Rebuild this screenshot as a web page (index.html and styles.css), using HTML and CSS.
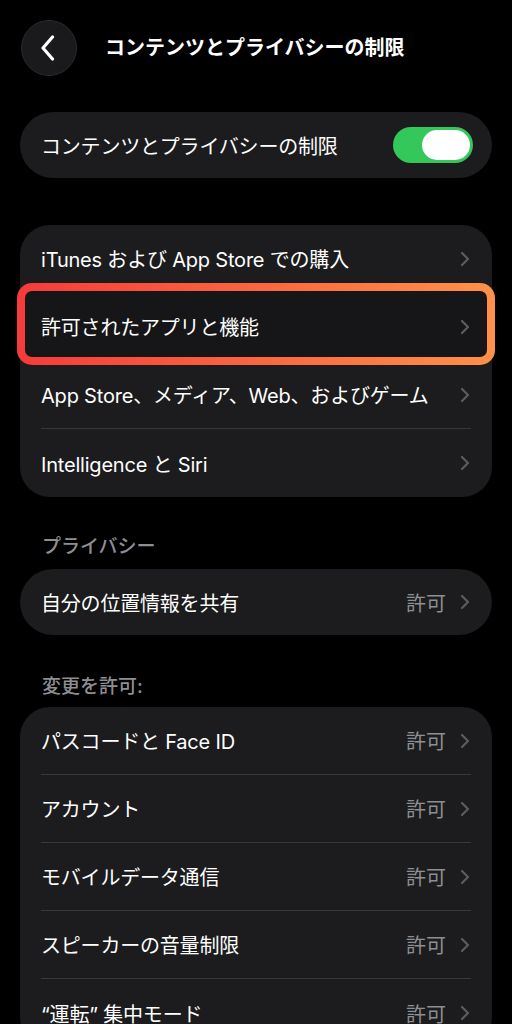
FILE: index.html
```html
<!DOCTYPE html>
<html lang="ja">
<head>
    <meta charset="UTF-8">
    <meta name="viewport" content="width=device-width, initial-scale=1.0">
    <title>コンテンツとプライバシーの制限</title>
    <link rel="stylesheet" href="styles.css">
</head>
<body>
    <header class="nav">
        <button class="back" aria-label="戻る">
            <svg width="16" height="26" viewBox="0 0 16 26"><path d="M12.5 2 L3 13 L12.5 24" fill="none" stroke="#fff" stroke-width="3.2" stroke-linecap="round" stroke-linejoin="round"/></svg>
        </button>
        <h1 class="nav-title">コンテンツとプライバシーの制限</h1>
    </header>

    <main class="content">
        <div class="group single toggle-group">
            <div class="row">
                <span class="label">コンテンツとプライバシーの制限</span>
                <span class="switch"><span class="knob"></span></span>
            </div>
        </div>

        <div class="group main-group">
            <div class="row">
                <span class="label">iTunes および App Store での購入</span>
                <span class="chev"><svg width="10" height="16" viewBox="0 0 10 16"><path d="M2 2 L8 8 L2 14" fill="none" stroke="#5c5c61" stroke-width="2.2" stroke-linecap="round" stroke-linejoin="round"/></svg></span>
            </div>
            <div class="row highlight">
                <span class="label">許可されたアプリと機能</span>
                <span class="chev"><svg width="10" height="16" viewBox="0 0 10 16"><path d="M2 2 L8 8 L2 14" fill="none" stroke="#5c5c61" stroke-width="2.2" stroke-linecap="round" stroke-linejoin="round"/></svg></span>
            </div>
            <div class="row">
                <span class="label">App Store、メディア、Web、およびゲーム</span>
                <span class="chev"><svg width="10" height="16" viewBox="0 0 10 16"><path d="M2 2 L8 8 L2 14" fill="none" stroke="#5c5c61" stroke-width="2.2" stroke-linecap="round" stroke-linejoin="round"/></svg></span>
            </div>
            <div class="row">
                <span class="label">Intelligence と Siri</span>
                <span class="chev"><svg width="10" height="16" viewBox="0 0 10 16"><path d="M2 2 L8 8 L2 14" fill="none" stroke="#5c5c61" stroke-width="2.2" stroke-linecap="round" stroke-linejoin="round"/></svg></span>
            </div>
        </div>

        <h2 class="section-title first">プライバシー</h2>
        <div class="group single">
            <div class="row">
                <span class="label">自分の位置情報を共有</span>
                <span class="value">許可</span>
                <span class="chev"><svg width="10" height="16" viewBox="0 0 10 16"><path d="M2 2 L8 8 L2 14" fill="none" stroke="#5c5c61" stroke-width="2.2" stroke-linecap="round" stroke-linejoin="round"/></svg></span>
            </div>
        </div>

        <h2 class="section-title">変更を許可:</h2>
        <div class="group">
            <div class="row">
                <span class="label">パスコードと Face ID</span>
                <span class="value">許可</span>
                <span class="chev"><svg width="10" height="16" viewBox="0 0 10 16"><path d="M2 2 L8 8 L2 14" fill="none" stroke="#5c5c61" stroke-width="2.2" stroke-linecap="round" stroke-linejoin="round"/></svg></span>
            </div>
            <div class="row">
                <span class="label">アカウント</span>
                <span class="value">許可</span>
                <span class="chev"><svg width="10" height="16" viewBox="0 0 10 16"><path d="M2 2 L8 8 L2 14" fill="none" stroke="#5c5c61" stroke-width="2.2" stroke-linecap="round" stroke-linejoin="round"/></svg></span>
            </div>
            <div class="row">
                <span class="label">モバイルデータ通信</span>
                <span class="value">許可</span>
                <span class="chev"><svg width="10" height="16" viewBox="0 0 10 16"><path d="M2 2 L8 8 L2 14" fill="none" stroke="#5c5c61" stroke-width="2.2" stroke-linecap="round" stroke-linejoin="round"/></svg></span>
            </div>
            <div class="row">
                <span class="label">スピーカーの音量制限</span>
                <span class="value">許可</span>
                <span class="chev"><svg width="10" height="16" viewBox="0 0 10 16"><path d="M2 2 L8 8 L2 14" fill="none" stroke="#5c5c61" stroke-width="2.2" stroke-linecap="round" stroke-linejoin="round"/></svg></span>
            </div>
            <div class="row">
                <span class="label">“運転” 集中モード</span>
                <span class="value">許可</span>
                <span class="chev"><svg width="10" height="16" viewBox="0 0 10 16"><path d="M2 2 L8 8 L2 14" fill="none" stroke="#5c5c61" stroke-width="2.2" stroke-linecap="round" stroke-linejoin="round"/></svg></span>
            </div>
        </div>
    </main>
</body>
</html>
```

FILE: styles.css
```css
* {
    box-sizing: border-box;
}
html, body {
    background: #000;
}
body {
    margin: 0;
    width: 512px;
    color: #fff;
    font-family: Inter, "Noto Sans CJK JP", sans-serif;
    overflow: hidden;
}
.nav {
    display: flex;
    align-items: center;
    gap: 28px;
    padding: 20px 20px 0 21px;
    height: 76px;
}
.back {
    width: 56px;
    height: 56px;
    border-radius: 50%;
    background: #1a1a1c;
    border: 1px solid #2a2a2c;
    display: flex;
    align-items: center;
    justify-content: center;
    padding: 0 3px 0 0;
}
.back svg {
    display: block;
}
.nav-title {
    margin: 0;
    font-size: 20px;
    font-weight: 700;
    line-height: 24px;
}
.content {
    padding: 36px 20px 0;
}
.group {
    background: #1c1c1e;
    border-radius: 30px;
}
.group.single {
    border-radius: 33px;
}
.main-group {
    margin-top: 47px;
}
.row {
    position: relative;
    display: flex;
    align-items: center;
    height: 68px;
    margin: 0 21px 0 21px;
    border-bottom: 1px solid #38383a;
    font-size: 20px;
}
.row:last-child {
    border-bottom: none;
}
.single .row {
    height: 66px;
}
.label {
    position: relative;
    z-index: 1;
    flex: 1;
    white-space: nowrap;
    letter-spacing: -0.2px;
}
.value {
    position: relative;
    z-index: 1;
    color: #8e8e93;
    margin-right: 14px;
}
.chev {
    position: relative;
    z-index: 1;
    display: flex;
    margin-right: 1px;
}
.toggle-group .row {
    margin-right: 19px;
}
.switch {
    width: 80px;
    height: 36px;
    border-radius: 18px;
    background: #34c759;
    display: flex;
    align-items: center;
    justify-content: flex-end;
    padding-right: 3px;
}
.knob {
    width: 48px;
    height: 30px;
    border-radius: 15px;
    background: #fff;
}
.highlight::before {
    content: "";
    position: absolute;
    top: -10px;
    bottom: -5px;
    left: -24px;
    right: -24px;
    border: 8px solid transparent;
    border-radius: 15px;
    background:
        linear-gradient(#161618, #161618) padding-box,
        linear-gradient(90deg, #f63b3b, #fb6a3f 55%, #ff9149) border-box;
}
.section-title {
    margin: 38px 0 10px 22px;
    font-size: 19px;
    font-weight: 500;
    line-height: 24px;
    color: #8e8e93;
}
.section-title.first {
    margin-top: 38px;
}
.single + .section-title {
    margin-top: 40px;
    margin-bottom: 8px;
}
```
